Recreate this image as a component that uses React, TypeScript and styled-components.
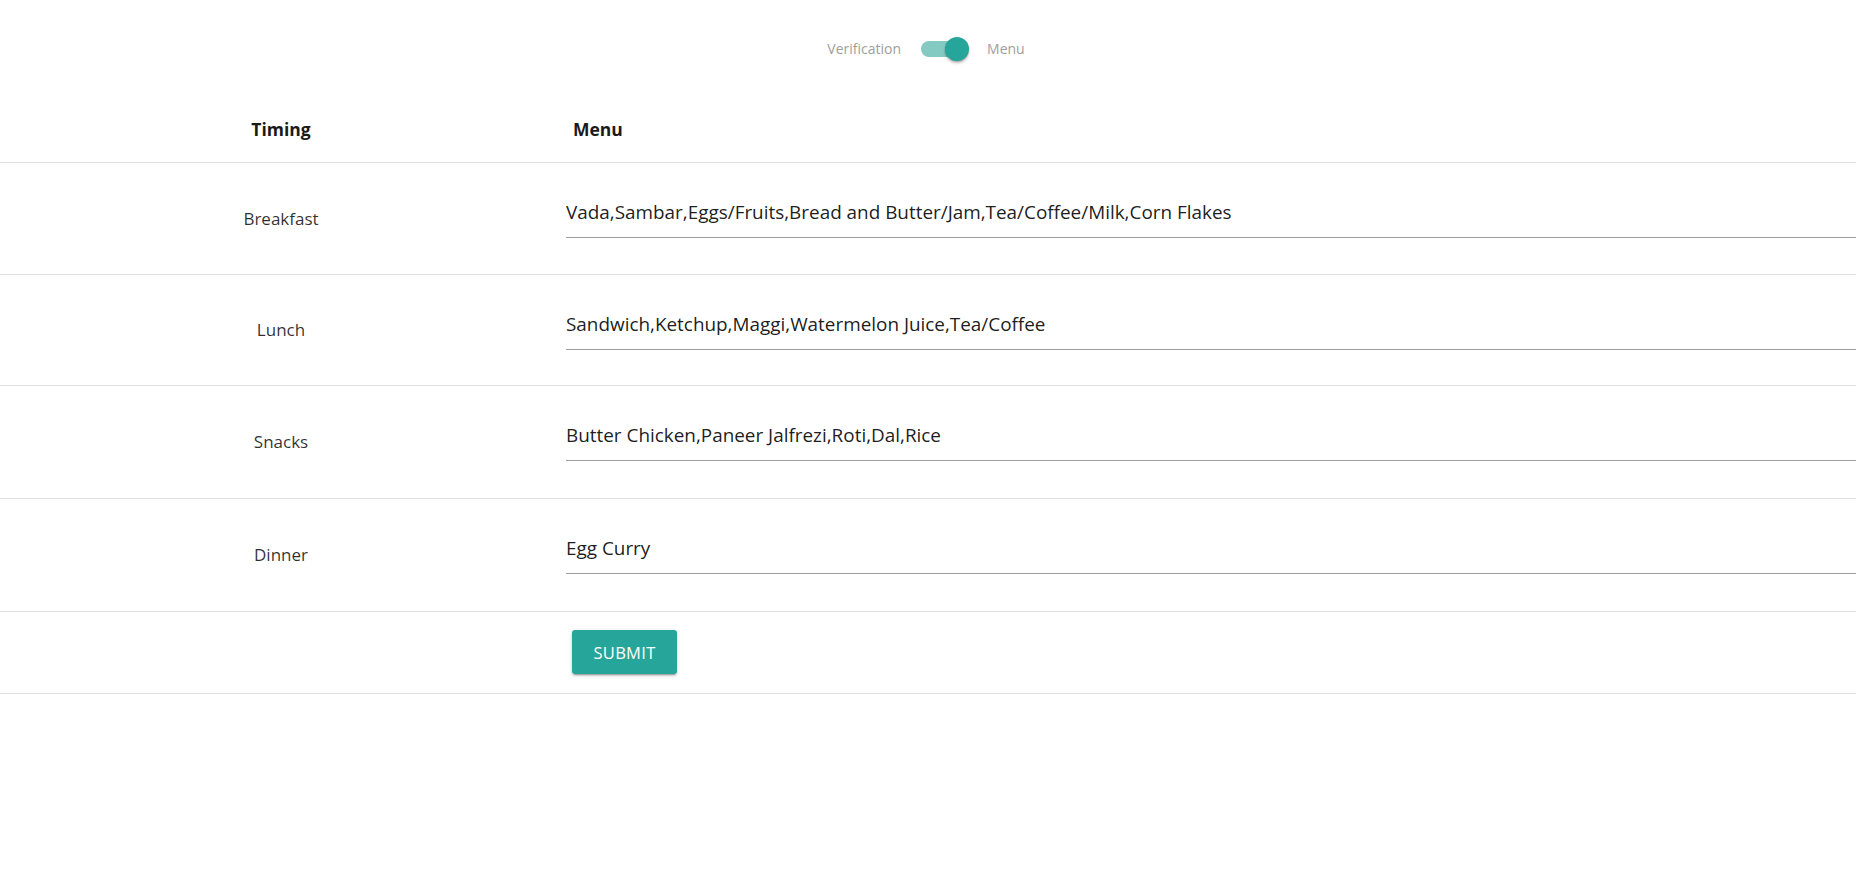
import React, { useState } from "react";
import styled, { createGlobalStyle } from "styled-components";

const GlobalStyle = createGlobalStyle`
  html, body { margin: 0; padding: 0; background: #ffffff; }
  body { font-family: "Open Sans", "Noto Sans", Arial, sans-serif; color: rgba(0,0,0,0.87); }
  * { box-sizing: border-box; }
`;

const Page = styled.div`
  width: 100%;
  min-height: 892px;
  background: #fff;
`;

const ToggleBar = styled.div`
  height: 97px;
  display: flex;
  align-items: center;
  justify-content: center;
  padding-right: 4px;
`;

const ToggleLabel = styled.span`
  font-size: 14px;
  color: #9e9e9e;
  line-height: 1;
`;

const SwitchTrack = styled.button<{ $on: boolean }>`
  position: relative;
  width: 40px;
  height: 16px;
  margin: 0 26px 0 20px;
  border: none;
  padding: 0;
  border-radius: 8px;
  cursor: pointer;
  background: ${(p) => (p.$on ? "#84cac3" : "#bdbdbd")};
`;

const SwitchThumb = styled.span<{ $on: boolean }>`
  position: absolute;
  top: 50%;
  left: ${(p) => (p.$on ? "24px" : "-8px")};
  width: 24px;
  height: 24px;
  margin-top: -12px;
  border-radius: 50%;
  background: ${(p) => (p.$on ? "#26a69a" : "#fafafa")};
  box-shadow: 0 2px 3px rgba(0, 0, 0, 0.25), 0 1px 1px rgba(0, 0, 0, 0.14);
  transition: left 0.15s;
`;

const Table = styled.table`
  width: 100%;
  border-collapse: collapse;
  table-layout: fixed;
`;

const HeadRow = styled.tr`
  height: 65px;
  border-bottom: 1px solid #e0e0e0;
`;

const HeadCell = styled.th<{ $center?: boolean }>`
  font-size: 17.5px;
  font-weight: 700;
  color: #1a1a1a;
  text-align: ${(p) => (p.$center ? "center" : "left")};
  padding: 0 0 0 ${(p) => (p.$center ? "0" : "11px")};
  vertical-align: middle;
`;

const BodyRow = styled.tr<{ $h: number }>`
  height: ${(p) => p.$h}px;
  border-bottom: 1px solid #e0e0e0;
`;

const LabelCell = styled.td`
  width: 562px;
  text-align: center;
  font-size: 17px;
  color: rgba(0, 0, 0, 0.82);
  vertical-align: middle;
  padding: 0;
`;

const FieldCell = styled.td`
  vertical-align: top;
  padding: 32px 0 0 4px;
`;

const MenuInput = styled.input`
  display: block;
  width: 100%;
  height: 43px;
  margin: 0;
  padding: 0 0 7px 0;
  border: none;
  border-bottom: 1px solid #9e9e9e;
  outline: none;
  background: transparent;
  font-family: "Open Sans", "Noto Sans", Arial, sans-serif;
  font-size: 18.9px;
  color: rgba(0, 0, 0, 0.9);
  &:focus {
    border-bottom: 2px solid #26a69a;
  }
`;

const ButtonCell = styled.td`
  vertical-align: middle;
  padding: 0 0 0 10px;
`;

const SubmitButton = styled.button`
  width: 105px;
  height: 44px;
  border: none;
  border-radius: 3px;
  background: #26a69a;
  color: #ffffff;
  font-family: "Open Sans", "Noto Sans", Arial, sans-serif;
  font-size: 16.5px;
  letter-spacing: 0.3px;
  text-transform: uppercase;
  cursor: pointer;
  box-shadow: 0 3px 1px -2px rgba(0, 0, 0, 0.2), 0 2px 2px 0 rgba(0, 0, 0, 0.14),
    0 1px 5px 0 rgba(0, 0, 0, 0.12);
`;

const rows = [
  { timing: "Breakfast", menu: "Vada,Sambar,Eggs/Fruits,Bread and Butter/Jam,Tea/Coffee/Milk,Corn Flakes", h: 112 },
  { timing: "Lunch", menu: "Sandwich,Ketchup,Maggi,Watermelon Juice,Tea/Coffee", h: 111 },
  { timing: "Snacks", menu: "Butter Chicken,Paneer Jalfrezi,Roti,Dal,Rice", h: 113 },
  { timing: "Dinner", menu: "Egg Curry", h: 113 },
];

export default function App() {
  const [on, setOn] = useState(true);
  return (
    <Page>
      <GlobalStyle />
      <ToggleBar>
        <ToggleLabel>Verification</ToggleLabel>
        <SwitchTrack $on={on} onClick={() => setOn(!on)} aria-label="toggle">
          <SwitchThumb $on={on} />
        </SwitchTrack>
        <ToggleLabel>Menu</ToggleLabel>
      </ToggleBar>
      <Table>
        <colgroup>
          <col style={{ width: 562 }} />
          <col />
        </colgroup>
        <thead>
          <HeadRow>
            <HeadCell $center>Timing</HeadCell>
            <HeadCell>Menu</HeadCell>
          </HeadRow>
        </thead>
        <tbody>
          {rows.map((r) => (
            <BodyRow key={r.timing} $h={r.h}>
              <LabelCell>{r.timing}</LabelCell>
              <FieldCell>
                <MenuInput defaultValue={r.menu} />
              </FieldCell>
            </BodyRow>
          ))}
          <BodyRow $h={82}>
            <LabelCell />
            <ButtonCell>
              <SubmitButton>Submit</SubmitButton>
            </ButtonCell>
          </BodyRow>
        </tbody>
      </Table>
    </Page>
  );
}
